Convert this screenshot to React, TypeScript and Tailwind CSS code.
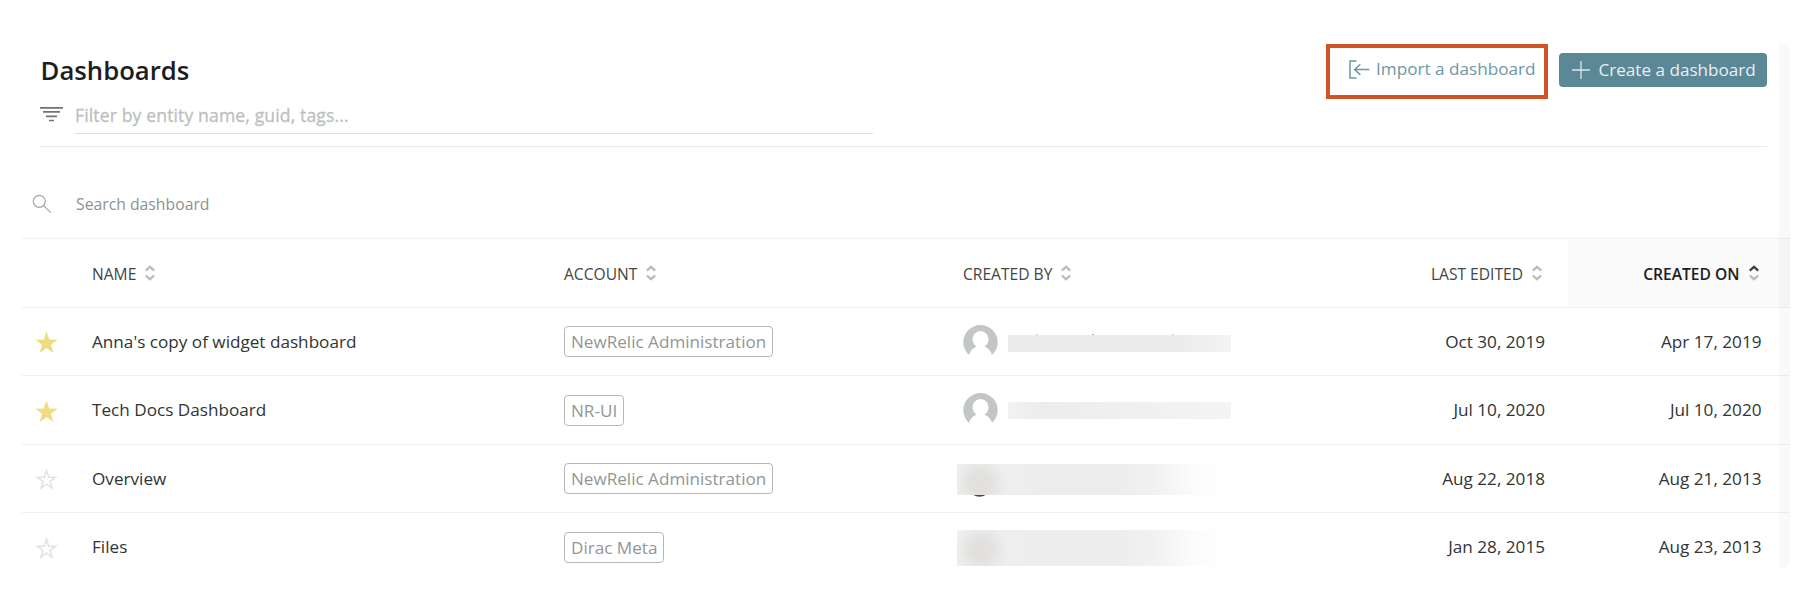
import type { ReactNode } from "react";

const COLS = "grid grid-cols-[70px_472px_399px_382px_223px_222px]";

function SortIcon({ active = false }: { active?: boolean }) {
  return (
    <svg width="10" height="16" viewBox="0 0 10 16" fill="none" strokeWidth="2.3" className="shrink-0">
      <path d="M0.800 5.600 L5 1.900 L9.200 5.600" stroke={active ? "#3a3f3f" : "#b9bcbc"} />
      <path d="M0.800 10.500 L5 14.200 L9.200 10.500" stroke="#b9bcbc" />
    </svg>
  );
}

function Star({ filled }: { filled: boolean }) {
  return filled ? (
    <svg width="23" height="23" viewBox="0 0 23 23">
      <path
        d="M11.5 0.5 L14.2 8.6 L22.6 8.7 L15.9 13.7 L18.4 22 L11.5 17 L4.6 22 L7.1 13.7 L0.4 8.7 L8.8 8.6 Z"
        fill="#eedc7e"
      />
    </svg>
  ) : (
    <svg width="23" height="23" viewBox="0 0 23 23">
      <path
        d="M11.5 2.4 L13.7 9.2 L20.6 9.3 L15 13.4 L17.1 20.2 L11.5 16.2 L5.9 20.2 L8 13.4 L2.4 9.3 L9.3 9.2 Z"
        fill="none"
        stroke="#e2e3e3"
        strokeWidth="1.6"
      />
    </svg>
  );
}

function Avatar() {
  return (
    <svg width="35" height="35" viewBox="0 0 35 35" className="shrink-0">
      <path
        d="M6 30 A17.2 17.2 0 1 1 29 30 C28 26 25.500 23 21.500 21.700 A8 8.400 0 1 0 13.500 21.700 C9.500 23 7 26 6 30 Z"
        fill="#c3c6c6"
      />
    </svg>
  );
}

function HeaderCell({ label, right = false, active = false }: { label: string; right?: boolean; active?: boolean }) {
  return (
    <div
      className={
        "flex items-center gap-[9px] text-[15.6px] " +
        (right ? "justify-end " : "") +
        (active ? "bg-[#fafafa] pr-[31.500px] font-semibold text-[#1c2020]" : right ? "pr-[26px] text-[#414646]" : "text-[#414646]")
      }
    >
      <span className="relative top-[1.600px] whitespace-nowrap">{label}</span>
      <SortIcon active={active} />
    </div>
  );
}

type Row = { name: string; account: string; starred: boolean; edited: string; created: string; owner: ReactNode };

const rows: Row[] = [
  {
    name: "Anna's copy of widget dashboard",
    account: "NewRelic Administration",
    starred: true,
    edited: "Oct 30, 2019",
    created: "Apr 17, 2019",
    owner: (
      <>
        <Avatar />
        <div className="relative top-[1.500px] ml-[10.400px] h-[17px] w-[223px] bg-linear-to-r from-[#ececec] from-80% to-[#f4f4f4]">
          <i className="absolute -top-px left-[28px] h-px w-[2px] bg-[#c4c4c4]" />
          <i className="absolute -top-px left-[84px] h-px w-[2px] bg-[#b4b4b4]" />
          <i className="absolute -top-px left-[164px] h-px w-[2px] bg-[#c4c4c4]" />
        </div>
      </>
    ),
  },
  {
    name: "Tech Docs Dashboard",
    account: "NR-UI",
    starred: true,
    edited: "Jul 10, 2020",
    created: "Jul 10, 2020",
    owner: (
      <>
        <Avatar />
        <div className="ml-[10.400px] h-[17px] w-[223px] bg-linear-to-r from-[#f2f2f2] via-[#ececec] via-15% to-[#f4f4f4]" />
      </>
    ),
  },
  {
    name: "Overview",
    account: "NewRelic Administration",
    starred: false,
    edited: "Aug 22, 2018",
    created: "Aug 21, 2013",
    owner: (
      <div className="-ml-[6px] h-[31px] w-[270px] bg-[radial-gradient(circle_at_23px_19px,#e1e0de_0,#e2e1df_10px,transparent_27px),linear-gradient(90deg,#f0f0f0_0,#ededed_30%,#ededed_60%,#f1f1f1_72%,#fbfbfb_87%,#ffffff_100%)]">
        <svg width="14" height="3" viewBox="0 0 14 3" className="relative left-[16px] top-[31px] block">
          <path d="M0.500 0 H12.500 Q10 1.700 6.500 1.700 Q3 1.700 0.500 0 Z" fill="#454545" />
        </svg>
      </div>
    ),
  },
  {
    name: "Files",
    account: "Dirac Meta",
    starred: false,
    edited: "Jan 28, 2015",
    created: "Aug 23, 2013",
    owner: (
      <div className="-ml-[6px] h-[36px] w-[270px] bg-[radial-gradient(circle_at_24px_20px,#e1e0de_0,#e2e1df_10px,transparent_27px),linear-gradient(90deg,#f0f0f0_0,#ededed_30%,#ededed_60%,#f1f1f1_72%,#fbfbfb_87%,#ffffff_100%)]" />
    ),
  },
];

export default function App() {
  return (
    <div className="h-[610px] w-[1804px] overflow-hidden bg-white pt-[43px] font-['Open_Sans','Noto_Sans',sans-serif]">
      <div className="relative ml-[22px] h-[526px] w-[1768px]">
        <header className="ml-[18px] flex h-[104px] w-[1727px] flex-col border-b border-[#e8e9e9]">
          <div className="flex h-[56px] items-start justify-between">
            <h1 className="mt-[10px] ml-[0.600px] text-[25.7px] leading-[36px] font-semibold text-[#1c1e1e]">Dashboards</h1>
            <div className="flex items-start">
              <div className="mt-px flex h-[55px] w-[222px] border-4 border-[#d15427] pl-[19px]">
                <button className="flex h-[43px] items-center text-[17.150px] text-[#6d97a4]">
                  <svg width="21" height="19" viewBox="0 0 21 19" fill="none" stroke="#6d97a4" strokeWidth="1.500" className="mr-[6px]">
                    <path d="M7.500 0.900 H1 V18 H7.500" />
                    <path d="M5.500 9.600 H20.500 M11.300 4.300 L5.700 9.600 L11.300 14.900" />
                  </svg>
                  <span className="-mt-px whitespace-nowrap">Import a dashboard</span>
                </button>
              </div>
              <button className="mt-[10px] ml-[11px] flex h-[34px] w-[208px] items-center rounded-[4px] bg-[#5b8897] pl-[13px] text-[17.100px] text-[#e9eff1]">
                <svg width="18" height="18" viewBox="0 0 18 18" stroke="#dbe5e8" strokeWidth="1.300" className="mr-[8.500px] shrink-0">
                  <path d="M9 0 V18 M0 9 H18" />
                </svg>
                <span className="-mt-px whitespace-nowrap">Create a dashboard</span>
              </button>
            </div>
          </div>
          <div className="flex h-[35px]">
            <svg width="23" height="16" viewBox="0 0 23 16" stroke="#6f7373" strokeWidth="1.700" className="mt-[7px] mr-[12px]">
              <path d="M0 1.800 H23 M3 5.900 H20 M6 10.300 H17 M9 14.500 H14" />
            </svg>
            <div className="h-[35px] w-[798px] border-b border-[#dcdddd] text-[17.600px] leading-[32px] font-medium tracking-[0.120px] text-[#bcbfbf] [-webkit-text-stroke:0.3px_#bcbfbf]">
              Filter by entity name, guid, tags...
            </div>
          </div>
        </header>

        <div className="flex h-[91.200px] pl-[10px] pt-[46px]">
          <svg width="20" height="20" viewBox="0 0 20 20" fill="none" stroke="#a3a6a6" strokeWidth="1.200" className="mt-[1px]">
            <circle cx="7.300" cy="7.300" r="6" />
            <path d="M11.600 11.600 L18.700 18.700" />
          </svg>
          <span className="ml-[24px] text-[15.750px] leading-[22px] text-[#8f9292]">Search dashboard</span>
        </div>

        <div className={COLS + " h-[68.500px] border-t border-[#eff0f0]"}>
          <span />
          <HeaderCell label="NAME" />
          <HeaderCell label="ACCOUNT" />
          <HeaderCell label="CREATED BY" />
          <HeaderCell label="LAST EDITED" right />
          <HeaderCell label="CREATED ON" right active />
        </div>
        {rows.map((r) => (
          <div
            key={r.name}
            className={COLS + " h-[68.500px] items-center border-t border-[#eff0f0] text-[17.150px] text-[#303434]"}
          >
            <div className="pl-[12.500px] pt-[2.500px]">
              <Star filled={r.starred} />
            </div>
            <div>{r.name}</div>
            <div className="relative top-[0.500px]">
              <span className="inline-flex h-[31px] items-center rounded-[4px] border border-[#b5b8b8] px-[6px] align-middle text-[17.100px] whitespace-nowrap text-[#929696]">
                {r.account}
              </span>
            </div>
            <div className="flex items-center pt-[2px]">{r.owner}</div>
            <div className="pr-[23px] text-right">{r.edited}</div>
            <div className="pr-[28.500px] text-right">{r.created}</div>
          </div>
        ))}
        <div className="absolute inset-y-0 right-0 w-[11px] rounded-r-[9px] bg-black/[0.022]" />
      </div>
    </div>
  );
}
